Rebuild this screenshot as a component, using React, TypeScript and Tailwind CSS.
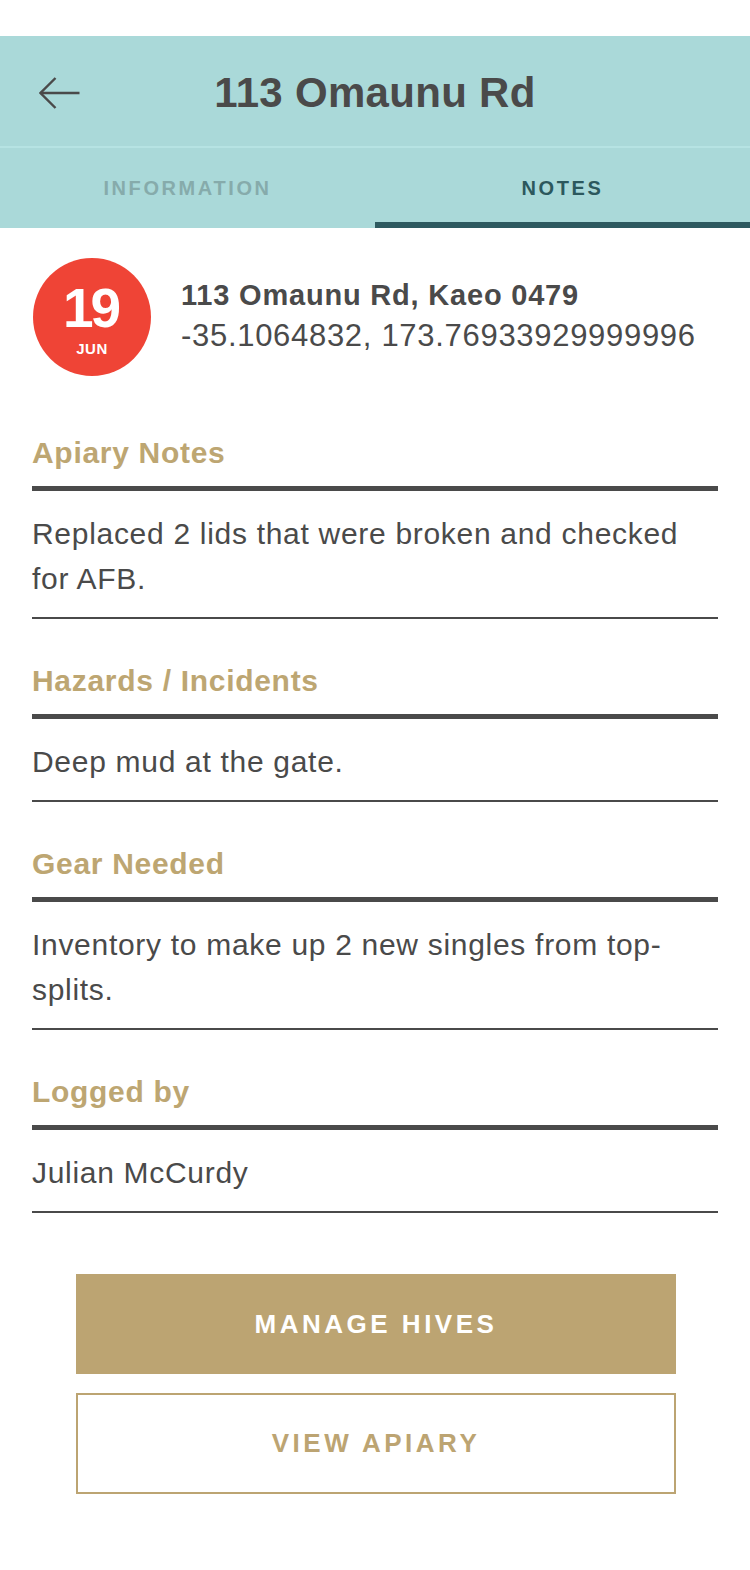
const notes = [
  { title: "Apiary Notes", body: "Replaced 2 lids that were broken and checked for AFB." },
  { title: "Hazards / Incidents", body: "Deep mud at the gate." },
  { title: "Gear Needed", body: "Inventory to make up 2 new singles from top-splits." },
  { title: "Logged by", body: "Julian McCurdy" },
];

function BackArrow() {
  return (
    <svg width="42" height="34" viewBox="0 0 42 34" fill="none" stroke="#4a4a4a" strokeWidth="2.4">
      <path d="M1.5 17H40.5" />
      <path d="M16.5 2L1.5 17L16.5 32" />
    </svg>
  );
}

function NoteSection({ title, body, first }: { title: string; body: string; first?: boolean }) {
  return (
    <section className={first ? "mt-[59px]" : "mt-[44px]"}>
      <h3 className="text-[30px] leading-[36px] font-bold tracking-[0.7px] text-[#bda672]">{title}</h3>
      <div className="mt-[15px] h-[5px] bg-[#4a4a4a]" />
      <p className="pt-[20px] pb-[16px] text-[30px] leading-[45px] tracking-[0.7px] text-[#4a4a4a]">{body}</p>
      <div className="h-[2px] bg-[#4a4a4a]" />
    </section>
  );
}

export default function App() {
  return (
    <div className="w-[750px] min-h-[1570px] bg-white pt-[36px] pb-[78px] font-['Liberation_Sans',Arial,sans-serif]">
      <header className="bg-[#aad9d9]">
        <div className="grid h-[110px] grid-cols-[110px_1fr_110px] items-center pt-1">
          <button className="flex items-center pl-[39px]">
            <BackArrow />
          </button>
          <h1 className="text-center text-[42px] leading-[48px] font-bold tracking-[0.3px] text-[#4a4a4a]">113 Omaunu Rd</h1>
          <div />
        </div>
        <div className="h-[2px] bg-[#b6e3e3]" />
        <nav className="grid h-[80px] grid-cols-2">
          <div className="flex items-center justify-center text-[20px] font-bold tracking-[2.6px] text-[#86abab]">
            INFORMATION
          </div>
          <div className="flex items-center justify-center text-[20px] font-bold tracking-[2.6px] text-[#2c585d] shadow-[inset_0_-6px_0_#2e5a60]">
            NOTES
          </div>
        </nav>
      </header>

      <main className="px-[32px]">
        <div className="flex items-center gap-[30px] pt-[30px] pl-px">
          <div className="flex h-[118px] w-[118px] shrink-0 flex-col items-center justify-center rounded-full bg-[#ef4436] text-white">
            <span className="mt-[6px] pr-[3px] text-[55px] leading-[48px] font-bold tracking-[-3px]">19</span>
            <span className="mt-[9px] text-[15px] leading-[16px] font-bold tracking-[0.5px]">JUN</span>
          </div>
          <div className="text-[#4a4a4a]">
            <p className="text-[29px] leading-[38px] font-bold tracking-[0.8px]">113 Omaunu Rd, Kaeo 0479</p>
            <p className="text-[31px] leading-[44px] tracking-[0.7px]">-35.1064832, 173.76933929999996</p>
          </div>
        </div>

        {notes.map((n, i) => (
          <NoteSection key={n.title} title={n.title} body={n.body} first={i === 0} />
        ))}

        <div className="mt-[61px] ml-[44px] flex w-[600px] flex-col gap-[19px]">
          <button className="h-[100px] bg-[#bca472] text-[26px] font-bold tracking-[3.5px] text-white">
            MANAGE HIVES
          </button>
          <button className="h-[101px] border-2 border-[#bca472] bg-white text-[26px] font-bold tracking-[3.5px] text-[#bca472]">
            VIEW APIARY
          </button>
        </div>
      </main>
    </div>
  );
}
